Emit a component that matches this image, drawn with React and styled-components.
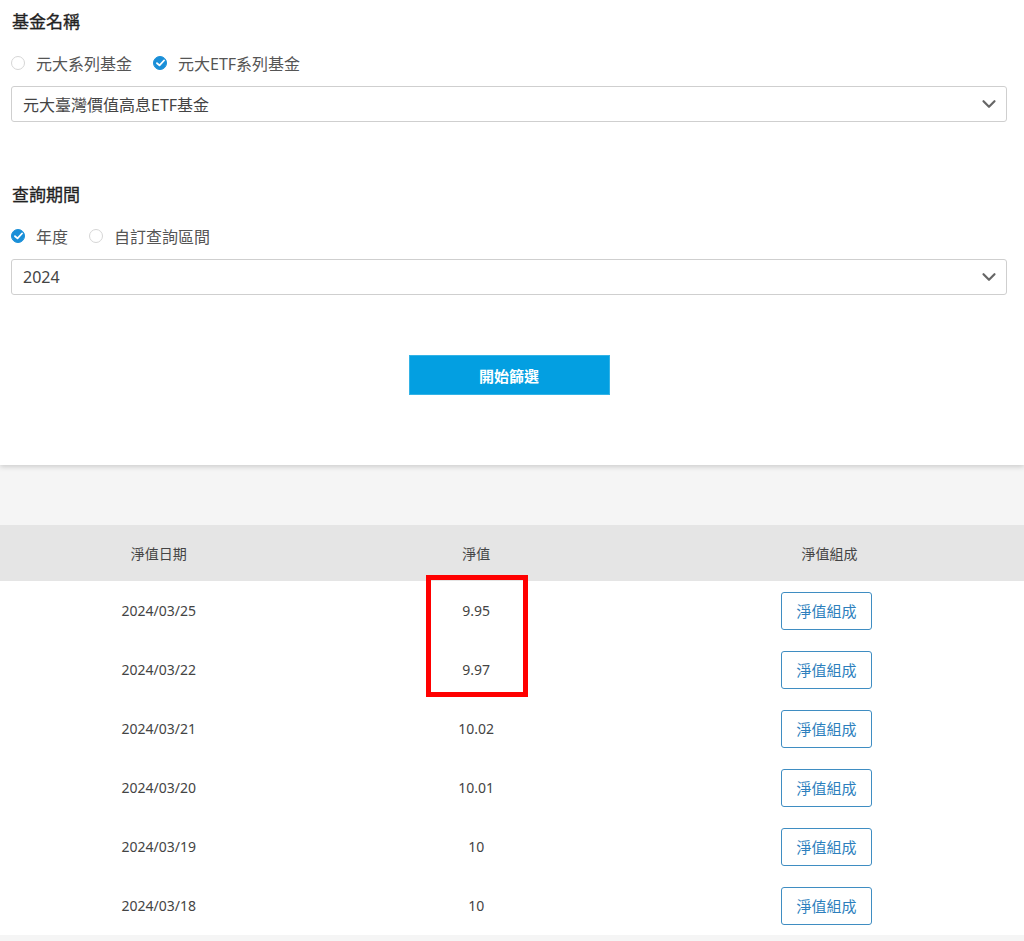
import React, { useState } from 'react';
import styled, { createGlobalStyle } from 'styled-components';
import { ChevronDown } from 'lucide-react';

const GlobalStyle = createGlobalStyle`
  body {
    margin: 0;
    background: #f5f5f5;
    font-family: "Noto Sans", "Noto Sans CJK TC", sans-serif;
    color: #333;
  }
`;

const Page = styled.div`
  position: relative;
  width: 1024px;
  min-height: 941px;
  background: #f5f5f5;
`;

const FilterPanel = styled.div`
  background: #fff;
  padding: 10px 17px 70px 11px;
  box-shadow: 0 2px 5px rgba(0, 0, 0, 0.16);
  position: relative;
  z-index: 1;
`;

const Section = styled.div`
  margin-top: ${(p) => p.$top || 0}px;
`;

const Heading = styled.h3`
  margin: 0;
  padding-left: 1px;
  font-size: 17px;
  line-height: 24px;
  font-weight: 400;
  color: #222;
  -webkit-text-stroke: 0.3px #222;
`;

const RadioRow = styled.div`
  display: flex;
  align-items: center;
  gap: 21px;
  margin: 17px 0 11px;
  height: 24px;
`;

const RadioLabel = styled.label`
  display: flex;
  align-items: center;
  gap: 11px;
  font-size: 16px;
  color: #555;
  cursor: pointer;
`;

const Dot = styled.span`
  width: 14px;
  height: 14px;
  border-radius: 50%;
  box-sizing: border-box;
  border: 1px solid ${(p) => (p.$on ? '#1a8fd8' : '#d6d6d6')};
  background: ${(p) => (p.$on ? '#1a8fd8' : '#fff')};
  display: flex;
  align-items: center;
  justify-content: center;
`;

const SelectBox = styled.div`
  height: 36px;
  box-sizing: border-box;
  border: 1px solid #cfcfcf;
  border-radius: 3px;
  display: flex;
  align-items: center;
  justify-content: space-between;
  padding: 0 6px 0 11px;
  font-size: 16px;
  color: #444;
`;

const ButtonRow = styled.div`
  display: flex;
  justify-content: center;
  margin-top: 60px;
`;

const SubmitButton = styled.button`
  width: 201px;
  height: 40px;
  border: 1px solid #33b3e6;
  background: #039fe1;
  color: #fff;
  font-family: inherit;
  font-size: 15px;
  font-weight: 700;
  cursor: pointer;
`;

const Gap = styled.div`
  height: 60px;
`;

const Table = styled.table`
  width: 100%;
  border-collapse: collapse;
  background: #fff;
  table-layout: fixed;
`;

const Th = styled.th`
  width: ${(p) => p.$w};
  height: 56px;
  padding: 0;
  background: #e5e5e5;
  font-weight: 400;
  font-size: 14px;
  color: #444;
  text-align: center;
`;

const Td = styled.td`
  height: 59px;
  font-size: 14px;
  color: #444;
  text-align: center;
  padding: 0;
`;

const DetailButton = styled.button`
  width: 91px;
  height: 38px;
  margin-left: -6px;
  border: 1px solid #3f8dc2;
  border-radius: 3px;
  background: #fff;
  color: #2d7fbd;
  font-family: inherit;
  font-size: 15px;
  cursor: pointer;
`;

const Highlight = styled.div`
  position: absolute;
  left: 426px;
  top: 575px;
  width: 102px;
  height: 122px;
  box-sizing: border-box;
  border: 5px solid #f00;
  pointer-events: none;
`;

const Radio = ({ on, label, onClick }) => (
  <RadioLabel onClick={onClick}>
    <Dot $on={on}>
      {on && (
        <svg width="9" height="8" viewBox="0 0 9 8">
          <path d="M1 4.2 L3.5 6.4 L8 1.5" fill="none" stroke="#fff" strokeWidth="1.8" strokeLinecap="round" strokeLinejoin="round" />
        </svg>
      )}
    </Dot>
    {label}
  </RadioLabel>
);

const rows = [
  ['2024/03/25', '9.95'],
  ['2024/03/22', '9.97'],
  ['2024/03/21', '10.02'],
  ['2024/03/20', '10.01'],
  ['2024/03/19', '10'],
  ['2024/03/18', '10'],
];

const App = () => {
  const [series, setSeries] = useState('etf');
  const [period, setPeriod] = useState('year');

  return (
    <Page>
      <GlobalStyle />
      <FilterPanel>
        <Section>
          <Heading>基金名稱</Heading>
          <RadioRow>
            <Radio on={series === 'fund'} label="元大系列基金" onClick={() => setSeries('fund')} />
            <Radio on={series === 'etf'} label="元大ETF系列基金" onClick={() => setSeries('etf')} />
          </RadioRow>
          <SelectBox>
            元大臺灣價值高息ETF基金
            <ChevronDown size={22} color="#666" strokeWidth={2.4} />
          </SelectBox>
        </Section>
        <Section $top={61}>
          <Heading>查詢期間</Heading>
          <RadioRow>
            <Radio on={period === 'year'} label="年度" onClick={() => setPeriod('year')} />
            <Radio on={period === 'custom'} label="自訂查詢區間" onClick={() => setPeriod('custom')} />
          </RadioRow>
          <SelectBox>
            2024
            <ChevronDown size={22} color="#666" strokeWidth={2.4} />
          </SelectBox>
        </Section>
        <ButtonRow>
          <SubmitButton>開始篩選</SubmitButton>
        </ButtonRow>
      </FilterPanel>
      <Gap />
      <Table>
        <thead>
          <tr>
            <Th $w="31%">淨值日期</Th>
            <Th $w="31%">淨值</Th>
            <Th $w="38%">淨值組成</Th>
          </tr>
        </thead>
        <tbody>
          {rows.map(([date, nav]) => (
            <tr key={date}>
              <Td>{date}</Td>
              <Td>{nav}</Td>
              <Td>
                <DetailButton>淨值組成</DetailButton>
              </Td>
            </tr>
          ))}
        </tbody>
      </Table>
      <Highlight />
    </Page>
  );
};

export default App;
